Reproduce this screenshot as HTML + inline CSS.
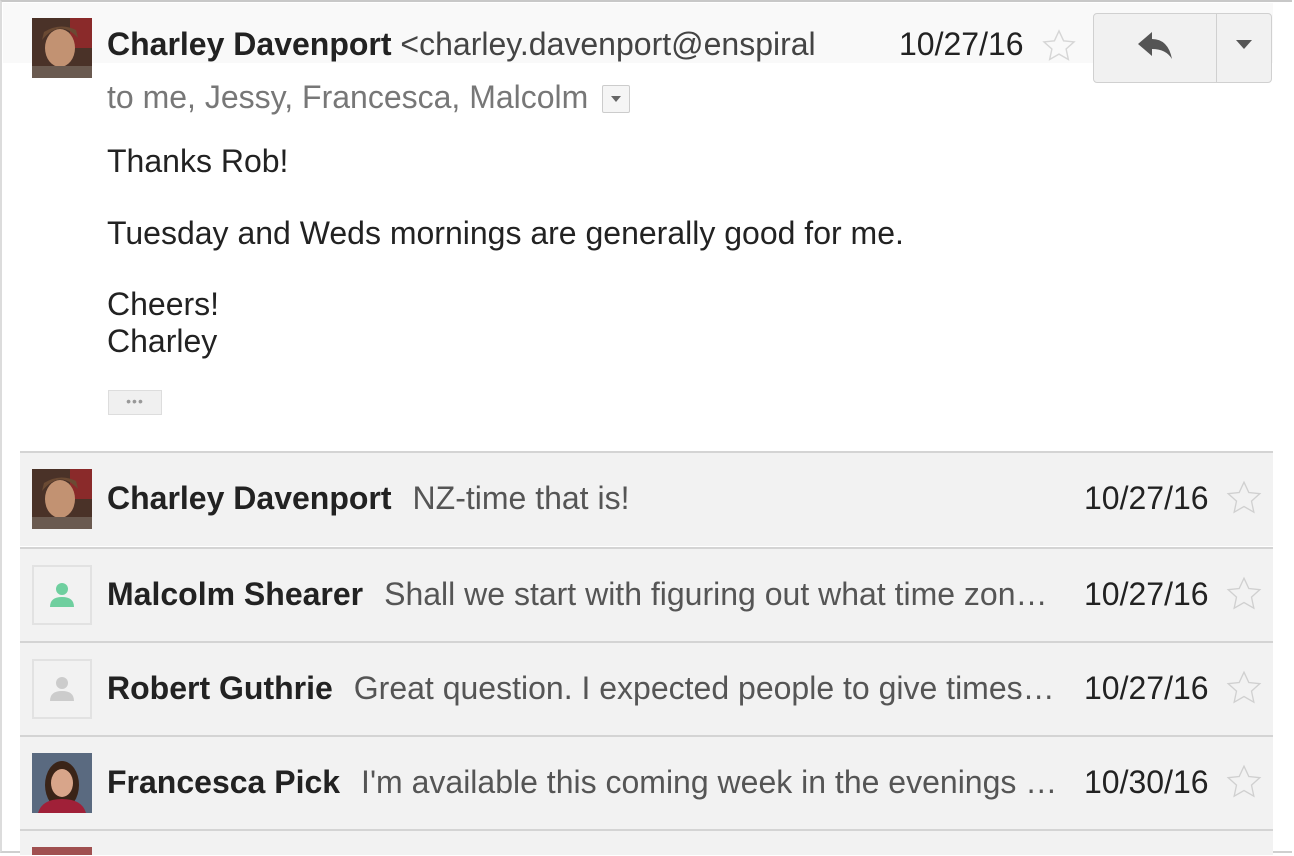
<!DOCTYPE html>
<html><head><meta charset="utf-8"><style>
body{margin:0;width:1294px;height:856px;overflow:hidden;background:#fff;font-family:"Liberation Sans",Arial,sans-serif;position:relative}
.abs{position:absolute}
.frame{left:0;top:0;width:1292px;height:853px;border-top:2px solid #c8c8c8;border-left:2px solid #dcdcdc;border-bottom:2px solid #cfcfcf;box-sizing:border-box}
.t{position:absolute;white-space:nowrap;font-size:32px;line-height:36px;color:#222}
.row{position:absolute;left:20px;width:1253px;height:93px;background:#f2f2f2;border-top:2px solid #d4d4d4}
.row .av{position:absolute;left:12px;top:16px;width:60px;height:60px}
.row .ln{position:absolute;left:87px;top:27px;width:956px;font-size:32px;line-height:36px;white-space:nowrap;overflow:hidden;text-overflow:ellipsis;color:#555}
.row .ln b{color:#222;margin-right:21px}
.row .dt{position:absolute;left:1064px;top:27px;font-size:32px;color:#222;line-height:36px}
.row .st{position:absolute;left:1203px;top:25px}
.ph{border:2px solid #e2e2e2;box-sizing:border-box;background:#f2f2f2}
</style></head><body>
<div class="abs frame"></div>
<div class="abs" style="left:3px;top:3px;width:1270px;height:60px;background:#f9f9f9"></div>
<svg class="abs" style="left:32px;top:18px" width="60" height="60"><rect width="60" height="60" fill="#4a3228"/><rect x="38" width="22" height="30" fill="#8a2a2a"/><ellipse cx="28" cy="30" rx="15" ry="19" fill="#c29272"/><path d="M10 22 Q28 0 46 20 L44 12 Q28 4 12 14Z" fill="#6b4a33"/><rect y="48" width="60" height="12" fill="#6a5a50"/></svg>
<div class="t" style="left:107px;top:26px;width:780px;overflow:hidden"><b>Charley Davenport</b> <span style="color:#444">&lt;charley.davenport@enspiral</span></div>
<div class="t" style="left:899px;top:26px">10/27/16</div>
<svg class="abs" style="left:1039px;top:27px" width="40" height="38" viewBox="0 0 24 24"><path d="M12 2.5l2.9 6.2 6.6.7-5 4.5 1.4 6.6L12 17.1l-5.9 3.4 1.4-6.6-5-4.5 6.6-.7z" fill="none" stroke="#d6d6d6" stroke-width="0.9"/></svg>
<div class="abs" style="left:1093px;top:13px;width:177px;height:68px;border:1px solid #d0d0d0;border-radius:4px;background:#f1f1f1"></div>
<div class="abs" style="left:1216px;top:14px;width:1px;height:68px;background:#d0d0d0"></div>
<svg class="abs" style="left:1136px;top:29px" width="38" height="34" viewBox="0 0 38 34"><path d="M2 15 L16 3 L16 10 Q32 10 36 30 Q30 20 16 20 L16 27Z" fill="#555"/></svg>
<svg class="abs" style="left:1236px;top:40px" width="16" height="10"><path d="M0 0H16L8 9Z" fill="#555"/></svg>
<div class="t" style="left:107px;top:79px;color:#777">to me, Jessy, Francesca, Malcolm</div>
<div class="abs" style="left:602px;top:85px;width:28px;height:28px;border:1px solid #ccc;border-radius:2px;box-sizing:border-box;background:#f5f5f5"></div>
<svg class="abs" style="left:611px;top:96px" width="10" height="6"><path d="M0 0H10L5 6Z" fill="#666"/></svg>
<div class="t" style="left:107px;top:143px">Thanks Rob!</div>
<div class="t" style="left:107px;top:215px">Tuesday and Weds mornings are generally good for me.</div>
<div class="t" style="left:107px;top:286px">Cheers!</div>
<div class="t" style="left:107px;top:323px">Charley</div>
<div class="abs" style="left:108px;top:390px;width:54px;height:25px;background:#f0f0f0;border:1px solid #ddd;box-sizing:border-box;text-align:center;color:#999;font-size:14px;line-height:20px;letter-spacing:1px">•••</div>

<div class="row" style="top:451px">
<svg class="av" width="60" height="60"><rect width="60" height="60" fill="#4a3228"/><rect x="38" width="22" height="30" fill="#8a2a2a"/><ellipse cx="28" cy="30" rx="15" ry="19" fill="#c29272"/><path d="M10 22 Q28 0 46 20 L44 12 Q28 4 12 14Z" fill="#6b4a33"/><rect y="48" width="60" height="12" fill="#6a5a50"/></svg>
<div class="ln"><b>Charley Davenport</b>NZ-time that is!</div>
<div class="dt">10/27/16</div>
<svg class="st" width="42" height="40" viewBox="0 0 24 24"><path d="M12 2.5l2.9 6.2 6.6.7-5 4.5 1.4 6.6L12 17.1l-5.9 3.4 1.4-6.6-5-4.5 6.6-.7z" fill="none" stroke="#d0d0d0" stroke-width="0.8"/></svg>
</div>
<div class="row" style="top:547px">
<div class="av ph"><svg width="56" height="56"><circle cx="28" cy="22" r="6" fill="#6fcf9f"/><path d="M16 40 Q16 30 28 30 Q40 30 40 40Z" fill="#6fcf9f"/></svg></div>
<div class="ln"><b>Malcolm Shearer</b>Shall we start with figuring out what time zones we're all in?</div>
<div class="dt">10/27/16</div>
<svg class="st" width="42" height="40" viewBox="0 0 24 24"><path d="M12 2.5l2.9 6.2 6.6.7-5 4.5 1.4 6.6L12 17.1l-5.9 3.4 1.4-6.6-5-4.5 6.6-.7z" fill="none" stroke="#d0d0d0" stroke-width="0.8"/></svg>
</div>
<div class="row" style="top:641px">
<div class="av ph"><svg width="56" height="56"><circle cx="28" cy="22" r="6" fill="#ccc"/><path d="M16 40 Q16 30 28 30 Q40 30 40 40Z" fill="#ccc"/></svg></div>
<div class="ln"><b>Robert Guthrie</b>Great question. I expected people to give times in their zones</div>
<div class="dt">10/27/16</div>
<svg class="st" width="42" height="40" viewBox="0 0 24 24"><path d="M12 2.5l2.9 6.2 6.6.7-5 4.5 1.4 6.6L12 17.1l-5.9 3.4 1.4-6.6-5-4.5 6.6-.7z" fill="none" stroke="#d0d0d0" stroke-width="0.8"/></svg>
</div>
<div class="row" style="top:735px">
<svg class="av" width="60" height="60"><rect width="60" height="60" fill="#5a6a80"/><ellipse cx="30" cy="32" rx="17" ry="24" fill="#3a2418"/><ellipse cx="30" cy="30" rx="11" ry="14" fill="#d8a58a"/><path d="M6 60 Q10 46 30 46 Q50 46 54 60Z" fill="#a02038"/></svg>
<div class="ln"><b>Francesca Pick</b>I'm available this coming week in the evenings - anytime</div>
<div class="dt">10/30/16</div>
<svg class="st" width="42" height="40" viewBox="0 0 24 24"><path d="M12 2.5l2.9 6.2 6.6.7-5 4.5 1.4 6.6L12 17.1l-5.9 3.4 1.4-6.6-5-4.5 6.6-.7z" fill="none" stroke="#d0d0d0" stroke-width="0.8"/></svg>
</div>
<div class="row" style="top:829px;height:24px">
<div class="abs" style="left:12px;top:16px;width:60px;height:8px;background:#a05050"></div>
</div>
</body></html>
